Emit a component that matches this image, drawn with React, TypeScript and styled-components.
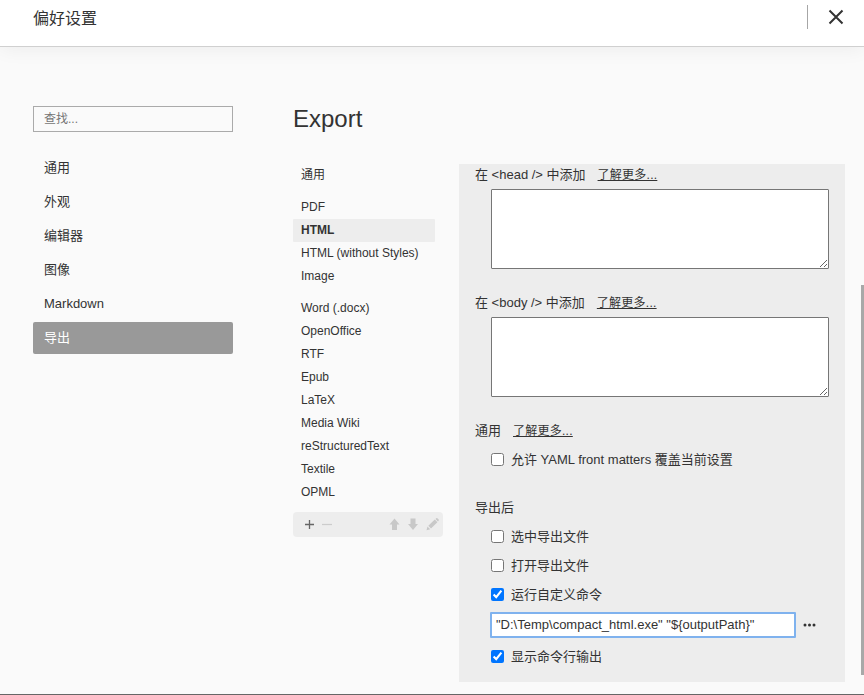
import React from "react";
import styled, { createGlobalStyle } from "styled-components";

const GlobalStyle = createGlobalStyle`
  * { box-sizing: border-box; }
  html, body { margin: 0; padding: 0; overflow: hidden; }
  body {
    font-family: "Liberation Sans", "Noto Sans CJK SC", sans-serif;
    font-size: 13px;
    color: #333;
    background: #fafafa;
  }
`;

const Window = styled.div`
  position: relative;
  display: flex;
  flex-direction: column;
  width: 864px;
  height: 695px;
  overflow: hidden;
  background: #fafafa;
  border-bottom: 1px solid #666;
`;

const Header = styled.header`
  display: flex;
  flex: none;
  align-items: flex-start;
  justify-content: space-between;
  height: 47px;
  padding: 5px 20px 0 33px;
  background: #fff;
  border-bottom: 1px solid #d0d0d0;
  box-shadow: 0 2px 20px rgba(0, 0, 0, 0.06);
`;

const Title = styled.h1`
  margin: 0;
  font-size: 16px;
  font-weight: 400;
  line-height: 28px;
`;

const CloseArea = styled.div`
  display: flex;
  align-items: center;
  height: 24px;
  padding-left: 20px;
  border-left: 1px solid #a6a6a6;
`;

const CloseIcon = styled.svg`
  display: block;
  width: 16px;
  height: 16px;
`;

const Body = styled.main`
  display: flex;
  flex: 1;
  padding-left: 33px;
`;

const Sidebar = styled.nav`
  flex: none;
  width: 200px;
  margin-right: 60px;
  padding-top: 59px;
`;

const Search = styled.input`
  display: block;
  width: 200px;
  height: 26px;
  margin: 0 0 20px;
  padding: 0 10px;
  border: 1px solid #aaa;
  border-radius: 0;
  outline: none;
  background: transparent;
  font: 12px "Liberation Sans", "Noto Sans CJK SC", sans-serif;
  &::placeholder { color: #757575; }
`;

const NavItem = styled.div<{ $active?: boolean }>`
  height: 32px;
  margin-bottom: 2px;
  padding-left: 11px;
  border-radius: 2px;
  line-height: 32px;
  color: ${(p) => (p.$active ? "#fff" : "#333")};
  background: ${(p) => (p.$active ? "#999" : "transparent")};
`;

const Content = styled.section`
  flex: none;
  width: 552px;
  padding-top: 57px;
`;

const Heading = styled.h2`
  height: 60px;
  margin: 0;
  font-size: 24px;
  font-weight: 400;
  line-height: 30px;
`;

const Columns = styled.div`
  display: flex;
  gap: 16px;
`;

const FormatColumn = styled.div`
  flex: none;
  width: 150px;
`;

const FormatGroup = styled.div`
  width: 142px;
  margin-bottom: 9px;
  &:last-of-type { margin-bottom: 8px; }
`;

const Format = styled.div<{ $active?: boolean }>`
  height: 23px;
  padding-left: 8px;
  border-radius: 1px;
  font-size: 12px;
  line-height: 22px;
  font-weight: ${(p) => (p.$active ? 700 : 400)};
  background: ${(p) => (p.$active ? "#ededed" : "transparent")};
`;

const Toolbar = styled.footer`
  display: flex;
  align-items: center;
  height: 25px;
  border-radius: 4px;
  background: #ededed;
`;

const ToolbarIcons = styled.svg`
  display: block;
  width: 150px;
  height: 25px;
`;

const Panel = styled.div`
  width: 386px;
  height: 518px;
  padding: 0 16px;
  background: #ededed;
`;

const Label = styled.div<{ $top?: number }>`
  display: flex;
  align-items: center;
  height: 20px;
  margin-top: ${(p) => p.$top ?? 0}px;
  padding-top: 2px;
  line-height: 20px;
  white-space: pre;
`;

const More = styled.a`
  margin-left: 12px;
  font-size: 12px;
  letter-spacing: 0.25px;
  text-decoration: underline;
`;

const Snippet = styled.textarea`
  display: block;
  width: 338px;
  height: 80px;
  margin: 5px 0 0 16px;
  border: 1px solid #767676;
  border-radius: 1px;
  background: #fff;
  resize: both;
  outline: none;
`;

const Option = styled.label<{ $top?: number }>`
  display: flex;
  align-items: center;
  height: 20px;
  margin: ${(p) => p.$top ?? 9}px 0 0 16px;
  padding-top: 2px;
  line-height: 20px;
`;

const Check = styled.input`
  width: 13px;
  height: 13px;
  margin: 0 7px 1px 0;
`;

const CommandRow = styled.div`
  display: flex;
  align-items: center;
  margin: 8px 0 0 15px;
`;

const Command = styled.input`
  width: 306px;
  height: 26px;
  padding: 0 4px 1px;
  border: 2px solid #7fb2ee;
  border-radius: 1px;
  outline: none;
  color: #333;
  background: #fff;
  font: 13px "Liberation Sans", "Noto Sans CJK SC", sans-serif;
`;

const Dots = styled.svg`
  width: 13px;
  height: 4px;
  margin-left: 7px;
`;

const ScrollThumb = styled.div`
  position: absolute;
  top: 285px;
  right: 0;
  width: 3px;
  height: 390px;
  background: #a8a8a8;
`;

const sections = ["通用", "外观", "编辑器", "图像", "Markdown", "导出"];

const formats = [
  ["通用"],
  ["PDF", "HTML", "HTML (without Styles)", "Image"],
  ["Word (.docx)", "OpenOffice", "RTF", "Epub", "LaTeX", "Media Wiki", "reStructuredText", "Textile", "OPML"],
];

export default function App() {
  return (
    <>
      <GlobalStyle />
      <Window>
        <Header>
          <Title>偏好设置</Title>
          <CloseArea>
            <CloseIcon viewBox="0 0 16 16">
              <path d="M1.5 1.5 14.5 14.5M14.5 1.5 1.5 14.5" stroke="#333" strokeWidth="2" fill="none" />
            </CloseIcon>
          </CloseArea>
        </Header>
        <Body>
          <Sidebar>
            <Search placeholder="查找..." />
            {sections.map((name) => (
              <NavItem key={name} $active={name === "导出"}>{name}</NavItem>
            ))}
          </Sidebar>
          <Content>
            <Heading>Export</Heading>
            <Columns>
              <FormatColumn>
                {formats.map((group) => (
                  <FormatGroup key={group[0]}>
                    {group.map((name) => (
                      <Format key={name} $active={name === "HTML"}>{name}</Format>
                    ))}
                  </FormatGroup>
                ))}
                <Toolbar>
                  <ToolbarIcons viewBox="0 0 150 25">
                    <path d="M12 12.5h9M16.5 8v9" stroke="#666" strokeWidth="1.3" fill="none" />
                    <path d="M29 12.5h10" stroke="#ccc" strokeWidth="1.2" />
                    <path d="M101.500 6.500 106.500 12.500H104V18H99V12.500H96.500Z" fill="#c8c8c8" />
                    <path d="M120 18 125 12H122.500V6.500H117.500V12H115Z" fill="#c8c8c8" />
                    <path d="M133.500 18.200 134.500 14.500 137.200 17.200ZM135.300 13.700 141.800 7.600 144.400 10.200 138 16.400ZM142.500 6.900 143.200 6.300Q144 5.800 144.700 6.500L145.500 7.300Q146.200 8 145.500 8.900L144.900 9.500Z" fill="#c8c8c8" />
                  </ToolbarIcons>
                </Toolbar>
              </FormatColumn>
              <Panel>
                <Label>在 &lt;head /&gt; 中添加<More>了解更多...</More></Label>
                <Snippet />
                <Label $top={23}>在 &lt;body /&gt; 中添加<More>了解更多...</More></Label>
                <Snippet />
                <Label $top={23}>通用<More>了解更多...</More></Label>
                <Option><Check type="checkbox" />允许 YAML front matters 覆盖当前设置</Option>
                <Label $top={28}>导出后</Label>
                <Option><Check type="checkbox" />选中导出文件</Option>
                <Option><Check type="checkbox" />打开导出文件</Option>
                <Option><Check type="checkbox" defaultChecked />运行自定义命令</Option>
                <CommandRow>
                  <Command defaultValue={'"D:\\Temp\\compact_html.exe" "${outputPath}"'} />
                  <Dots viewBox="0 0 13 4">
                    <circle cx="2" cy="2" r="1.500" fill="#333" />
                    <circle cx="6.500" cy="2" r="1.500" fill="#333" />
                    <circle cx="11" cy="2" r="1.500" fill="#333" />
                  </Dots>
                </CommandRow>
                <Option $top={8}><Check type="checkbox" defaultChecked />显示命令行输出</Option>
              </Panel>
            </Columns>
          </Content>
        </Body>
        <ScrollThumb />
      </Window>
    </>
  );
}
